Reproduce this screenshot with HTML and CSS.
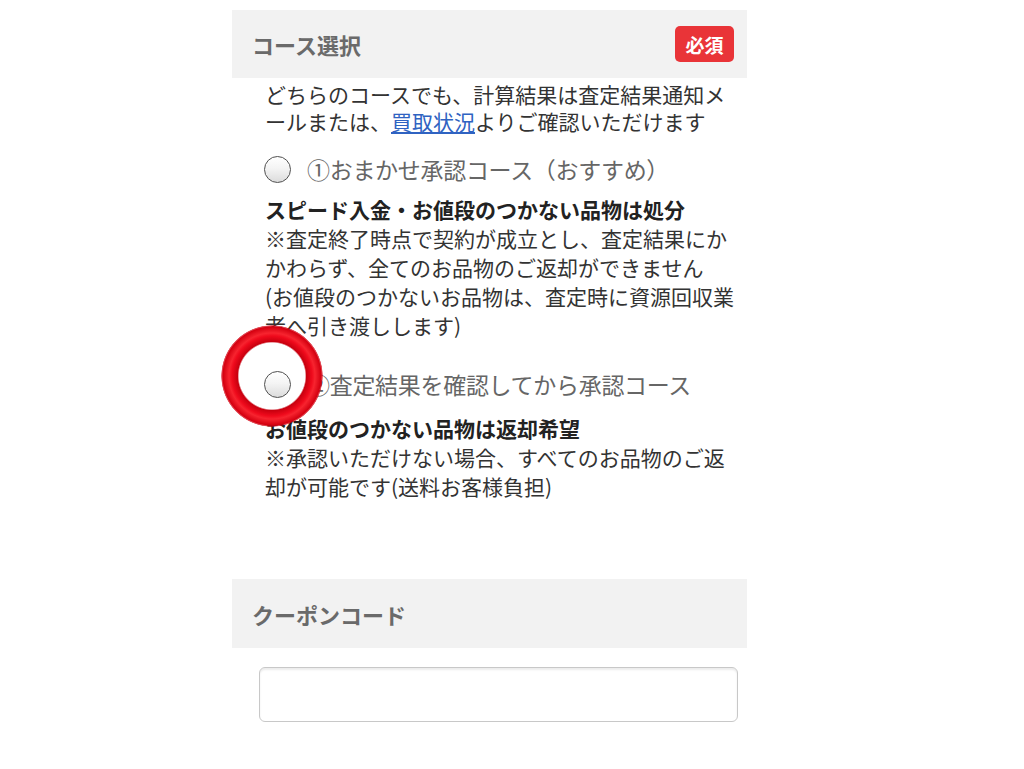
FILE: index.html
```html
<!DOCTYPE html>
<html lang="ja">
<head>
<meta charset="utf-8">
<title>コース選択</title>
<link rel="stylesheet" href="styles.css">
</head>
<body>
<div class="panel">
  <div class="section-head">
    <h2 class="section-title">コース選択</h2>
    <span class="badge">必須</span>
  </div>
  <div class="section-body">
    <p class="lead">どちらのコースでも、計算結果は査定結果通知メ<br>ールまたは、<a href="#" class="link">買取状況</a>よりご確認いただけます</p>
    <label class="radio-row first">
      <span class="radio"></span>
      <span class="radio-label">①おまかせ承認コース（おすすめ）</span>
    </label>
    <div class="desc first-desc">
      <strong class="desc-title">スピード入金・お値段のつかない品物は処分</strong>
      <span class="desc-text">※査定終了時点で契約が成立とし、査定結果にか<br>かわらず、全てのお品物のご返却ができません</span>
      <span class="desc-text">(お値段のつかないお品物は、査定時に資源回収業<br>者へ引き渡しします)</span>
    </div>
    <label class="radio-row second">
      <span class="radio"></span>
      <span class="radio-label">②査定結果を確認してから承認コース</span>
    </label>
    <div class="desc second-desc">
      <strong class="desc-title">お値段のつかない品物は返却希望</strong>
      <span class="desc-text">※承認いただけない場合、すべてのお品物のご返<br>却が可能です(送料お客様負担)</span>
    </div>
  </div>
  <div class="section-head coupon-head">
    <h2 class="section-title">クーポンコード</h2>
  </div>
  <div class="coupon-body">
    <div class="text-input"></div>
  </div>
  <div class="mark-ring"></div>
</div>
</body>
</html>
```

FILE: styles.css
```css
html, body {
  margin: 0;
  padding: 0;
  background: #ffffff;
}

body {
  font-family: "Noto Sans CJK JP", "Noto Sans", sans-serif;
  color: #333333;
}

.panel {
  position: relative;
  margin-left: 232px;
  width: 515px;
  padding-top: 10px;
}

.section-head {
  height: 68px;
  background: #f2f2f2;
  display: flex;
  align-items: center;
  justify-content: space-between;
  padding: 0 13px 0 20px;
  box-sizing: border-box;
}

.section-title {
  margin: 0;
  font-size: 22px;
  font-weight: bold;
  color: #6a6a6a;
  line-height: 30px;
}

.badge {
  width: 59px;
  height: 36px;
  border-radius: 5px;
  background: #e93438;
  color: #ffffff;
  font-size: 19px;
  font-weight: bold;
  display: flex;
  align-items: center;
  justify-content: center;
  line-height: 1;
}

.section-body {
  padding: 0 10px 0 33px;
  white-space: nowrap;
}

.lead {
  margin: 3px 0 0;
  font-size: 21px;
  line-height: 27px;
  color: #333333;
}

.link {
  display: inline-block;
  line-height: 27px;
  vertical-align: top;
  color: #2f63c2;
  text-decoration: underline;
}

.radio-row {
  display: flex;
  align-items: center;
  height: 30px;
  gap: 16px;
}

.radio-row.first {
  margin-top: 19px;
}

.radio-row.second {
  margin-top: 29px;
}

.radio {
  width: 27px;
  height: 27px;
  box-sizing: border-box;
  border-radius: 50%;
  border: 1.5px solid #505050;
  background: linear-gradient(#ffffff 0%, #f4f4f4 45%, #dcdcdc 100%);
  flex: none;
  margin-left: -1px;
}

.radio-label {
  font-size: 23px;
  line-height: 30px;
  color: #666666;
  letter-spacing: -0.3px;
}

.desc {
  display: flex;
  flex-direction: column;
  font-size: 21px;
  line-height: 29px;
}

.first-desc {
  margin-top: 11px;
}

.second-desc {
  margin-top: 15px;
}

.desc-title {
  font-weight: bold;
  color: #222222;
}

.desc-text {
  color: #333333;
}

.coupon-head {
  margin-top: 78px;
  height: 69px;
}

.coupon-body {
  padding: 19px 9px 0 27px;
}

.text-input {
  height: 55px;
  box-sizing: border-box;
  border: 1.5px solid #c8c8c8;
  border-radius: 6px;
  background: #ffffff;
  box-shadow: inset 0 2px 2px rgba(0, 0, 0, 0.08);
}

.mark-ring {
  position: absolute;
  left: -11px;
  top: 325px;
  width: 102px;
  height: 102px;
  border-radius: 50%;
  background: radial-gradient(circle closest-side, rgba(255,255,255,0) 33px, #c8000f 34.5px, #ef0a1c 40px, #f7242f 43px, #d40010 49px, rgba(212,0,16,0.6) 50.5px, rgba(212,0,16,0) 51px);
  filter: blur(0.6px);
}
```
